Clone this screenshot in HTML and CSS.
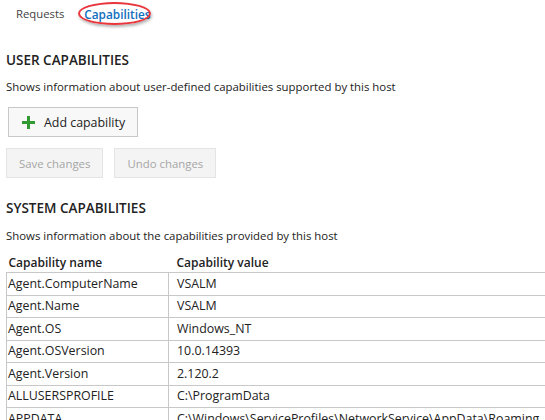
FILE: index.html
```html
<!DOCTYPE html>
<html>
<head>
<meta charset="utf-8">
<link rel="stylesheet" href="styles.css">
</head>
<body>
<div class="tabs">
  <span class="tab">Requests</span>
  <span class="tab active">Capabilities<span class="ring"></span></span>
</div>
<section class="section user">
  <h2 class="heading">USER CAPABILITIES</h2>
  <p class="desc">Shows information about user-defined capabilities supported by this host</p>
  <button class="btn add">
    <svg class="plus" width="13" height="13" viewBox="0 0 13 13"><path d="M5 0h3v5h5v3H8v5H5V8H0V5h5z" fill="#339933"/></svg>
    <span>Add capability</span>
  </button>
  <div class="actions">
    <button class="btn disabled">Save changes</button>
    <button class="btn disabled">Undo changes</button>
  </div>
</section>
<section class="section system">
  <h2 class="heading">SYSTEM CAPABILITIES</h2>
  <p class="desc">Shows information about the capabilities provided by this host</p>
  <table class="caps">
    <thead>
      <tr><th class="c-name">Capability name</th><th>Capability value</th></tr>
    </thead>
    <tbody>
      <tr><td>Agent.ComputerName</td><td>VSALM</td></tr>
      <tr><td>Agent.Name</td><td>VSALM</td></tr>
      <tr><td>Agent.OS</td><td>Windows_NT</td></tr>
      <tr><td>Agent.OSVersion</td><td>10.0.14393</td></tr>
      <tr><td>Agent.Version</td><td>2.120.2</td></tr>
      <tr><td>ALLUSERSPROFILE</td><td>C:\ProgramData</td></tr>
      <tr><td>APPDATA</td><td>C:\Windows\ServiceProfiles\NetworkService\AppData\Roaming</td></tr>
    </tbody>
  </table>
</section>
</body>
</html>
```
FILE: styles.css
```css
html, body {
  margin: 0;
  padding: 0;
  background: #ffffff;
  overflow: hidden;
}
body {
  font-family: "Open Sans", "Noto Sans", sans-serif;
  font-size: 11.4px;
  color: #222222;
  padding: 0 0 0 6px;
  width: 700px;
}
.tabs {
  display: flex;
  gap: 20px;
  padding-left: 10px;
  height: 28px;
  line-height: 28px;
}
.tab {
  color: #444444;
  font-size: 11.3px;
  position: relative;
}
.tab.active {
  color: #106ebe;
  font-weight: 600;
  font-size: 11.8px;
}
.ring {
  position: absolute;
  left: -6px;
  top: 2px;
  width: 69px;
  height: 19px;
  border: 2px solid #e8363c;
  border-radius: 50%;
  box-shadow: 1px 2px 3px rgba(0,0,0,0.3);
}
.heading {
  margin: 0;
  font-size: 13.5px;
  font-weight: 600;
  color: #222222;
  line-height: 18px;
}
.section.user {
  padding-top: 23px;
}
.desc {
  margin: 10px 0 0;
  line-height: 16px;
}
.btn {
  font-family: inherit;
  font-size: 11.4px;
  border: 1px solid #c8c8c8;
  background: #f8f8f8;
  color: #222222;
  display: inline-flex;
  align-items: center;
  padding: 0 12px;
  height: 30px;
}
.btn.add {
  margin: 12px 0 0 2px;
  padding: 0 12px 0 13px;
  gap: 9px;
  font-size: 12.4px;
}
.actions {
  display: flex;
  gap: 11px;
  margin-top: 11px;
}
.btn.disabled {
  color: #a6a6a6;
  background: #f4f4f4;
  border-color: #e4e4e4;
}
.section.system {
  padding-top: 21px;
}
.system .desc {
  margin-top: 11px;
}
.caps {
  margin-top: 10px;
  border-collapse: collapse;
  width: 620px;
}
.caps th {
  text-align: left;
  font-weight: 600;
  font-size: 12px;
  padding: 0 2px;
  height: 18px;
  line-height: 16px;
}
.caps th.c-name {
  width: 158px;
}
.caps th + th {
  padding-left: 8px;
}
.caps tbody tr {
  height: 22.5px;
}
.caps td {
  border: 1px solid #c8c8c8;
  padding: 0 8px 0 1px;
  font-size: 12.4px;
  line-height: 16px;
  white-space: nowrap;
}
.caps td + td {
  padding-left: 8px;
}
```
